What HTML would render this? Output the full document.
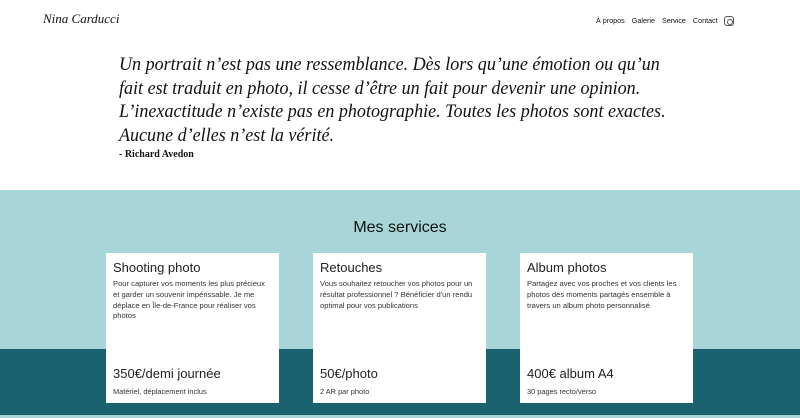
<!DOCTYPE html>
<html><head><meta charset="utf-8"><style>
*{margin:0;padding:0;box-sizing:border-box}
body{width:800px;height:418px;overflow:hidden;background:#fff;font-family:"Liberation Sans",sans-serif;position:relative}
.logo{position:absolute;left:43px;top:11px;font:italic 13px "Liberation Serif",serif;color:#111}
.nav{position:absolute;top:16px;left:596px;font-size:7.2px;color:#111;white-space:nowrap}
.nav span{margin-right:7px}
.ig{position:absolute;left:724px;top:16px;width:10px;height:10px;border:1px solid #555;border-radius:3px}
.ig:after{content:"";position:absolute;left:2px;top:2px;width:4px;height:4px;border:1px solid #555;border-radius:50%}
.quote{position:absolute;left:119px;top:53px;font:italic 19px/23.5px "Liberation Serif",serif;color:#111;transform:scaleX(0.95);transform-origin:left top;white-space:nowrap}
.auth{position:absolute;left:119px;top:149px;font:bold 10px "Liberation Serif",serif;color:#111}
.band1{position:absolute;top:190px;left:0;width:800px;height:159px;background:#a8d5d8}
.band2{position:absolute;top:349px;left:0;width:800px;height:66px;background:#1b6270}
.band3{position:absolute;top:415px;left:0;width:800px;height:3px;background:#a8d5d8}
h2{position:absolute;top:219px;left:0;width:800px;text-align:center;font-weight:normal;font-size:16px;color:#111}
.card{position:absolute;top:253px;width:173px;height:150px;background:#fff;padding:7px 7px;color:#222}
.card h3{font-weight:normal;font-size:13px;margin-bottom:4px}
.card p{font-size:7.6px;line-height:10.8px;color:#333}
.price{position:absolute;left:7px;top:113px;font-size:13px}
.sub{position:absolute;left:7px;top:134px;font-size:7.4px;color:#333}
</style></head><body>
<div class="logo">Nina Carducci</div>
<div class="nav"><span>À propos</span><span>Galerie</span><span>Service</span><span>Contact</span></div>
<div class="ig"></div>
<div class="quote">Un portrait n’est pas une ressemblance. Dès lors qu’une émotion ou qu’un<br>fait est traduit en photo, il cesse d’être un fait pour devenir une opinion.<br>L’inexactitude n’existe pas en photographie. Toutes les photos sont exactes.<br>Aucune d’elles n’est la vérité.</div>
<div class="auth">- Richard Avedon</div>
<div class="band1"></div><div class="band2"></div><div class="band3"></div>
<h2>Mes services</h2>
<div class="card" style="left:106px"><h3>Shooting photo</h3><p>Pour capturer vos moments les plus précieux et garder un souvenir impérissable. Je me déplace en Île-de-France pour réaliser vos photos</p><div class="price">350€/demi journée</div><div class="sub">Matériel, déplacement inclus</div></div>
<div class="card" style="left:313px"><h3>Retouches</h3><p>Vous souhaitez retoucher vos photos pour un résultat professionnel ? Bénéficier d'un rendu optimal pour vos publications</p><div class="price">50€/photo</div><div class="sub">2 AR par photo</div></div>
<div class="card" style="left:520px"><h3>Album photos</h3><p>Partagez avec vos proches et vos clients les photos des moments partagés ensemble à travers un album photo personnalisé</p><div class="price">400€ album A4</div><div class="sub">30 pages recto/verso</div></div>
</body></html>
